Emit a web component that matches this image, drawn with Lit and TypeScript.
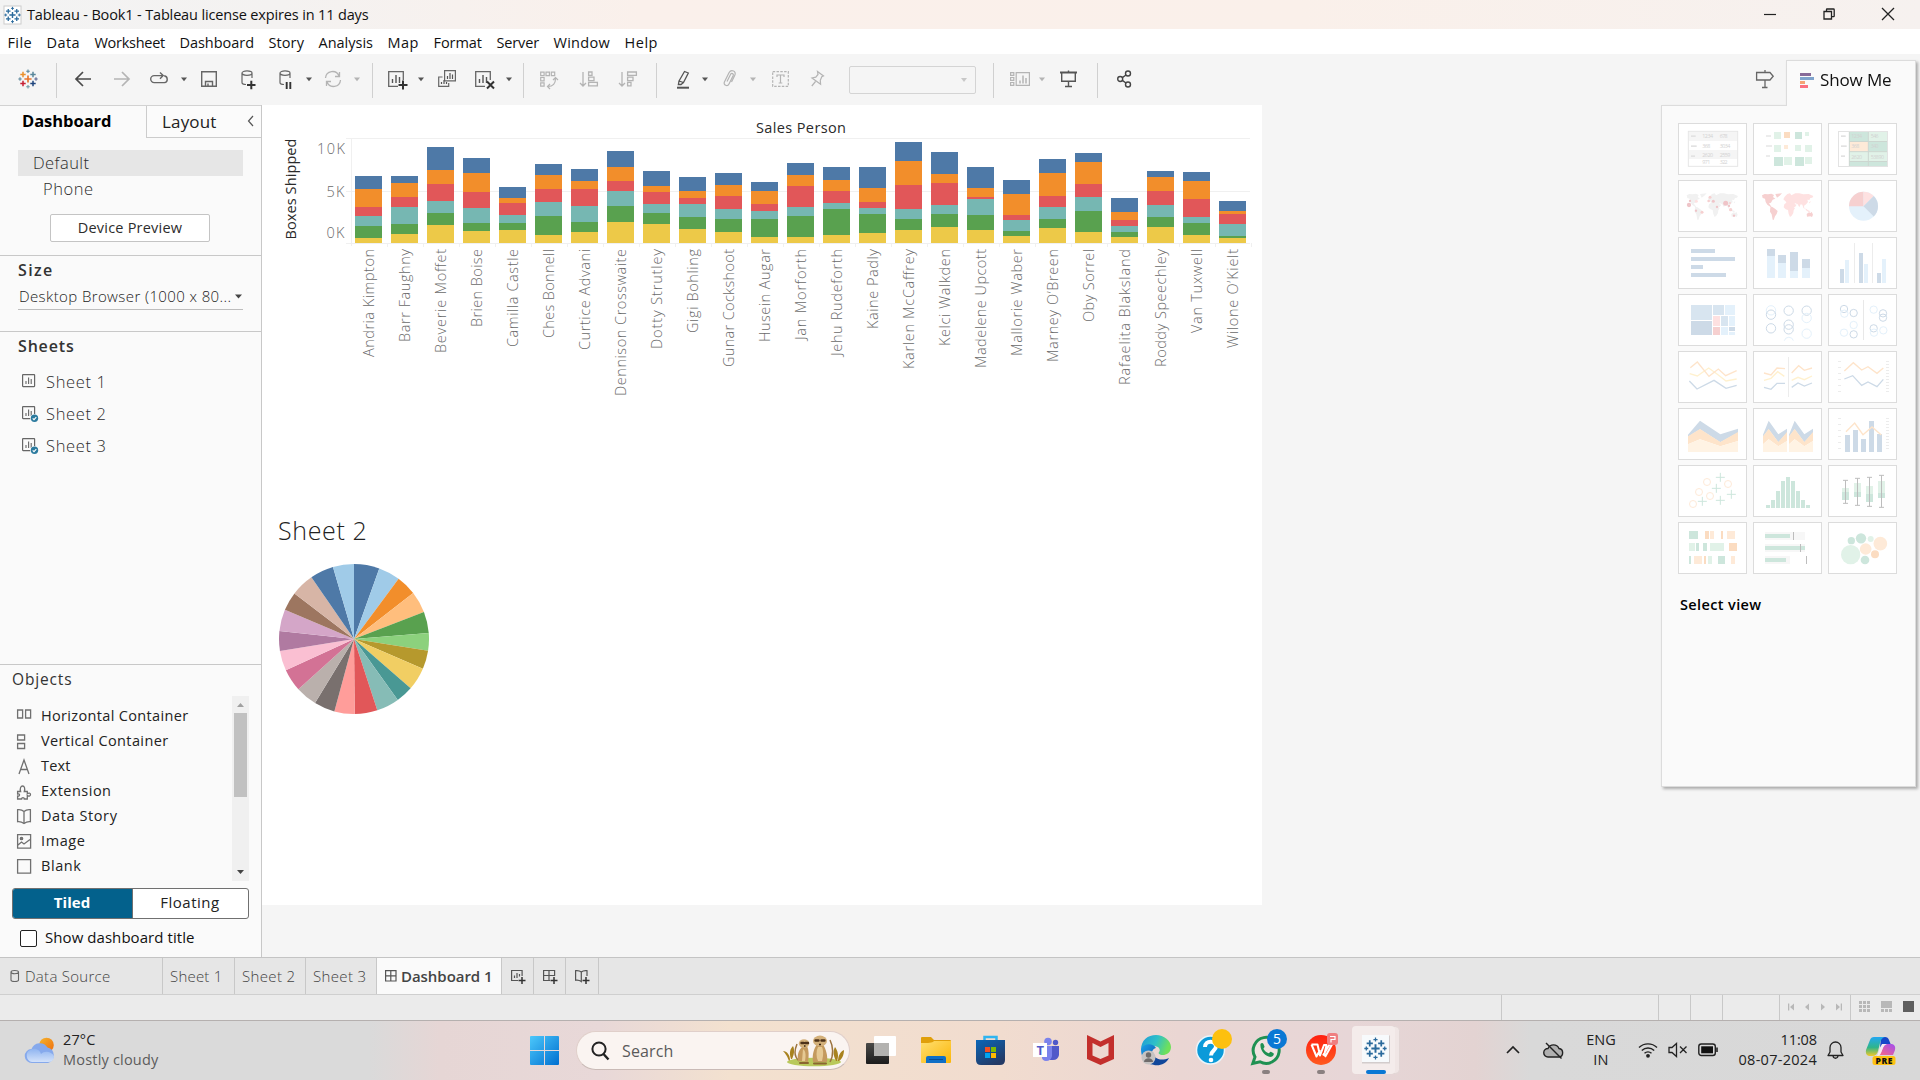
import { LitElement, html, svg, css } from "lit";
import { customElement, property } from "lit/decorators.js";

/** Single-line label whose tracking is adjusted so the text spans `w` pixels. */
@customElement("fit-label")
class FitLabel extends LitElement {
  @property({ type: Number }) w = 0;
  @property() text = "";
  static styles = css`
    :host { display: inline-block; white-space: pre; }
  `;
  firstUpdated() {
    const natural = this.getBoundingClientRect().width;
    if (this.w && natural) {
      this.style.letterSpacing = `${((this.w + 1.5 - natural) / this.text.length).toFixed(3)}px`;
    }
  }
  render() {
    return html`${this.text}`;
  }
}

const fit = (text: string, w: number) => html`<fit-label .text=${text} .w=${w}></fit-label>`;

const icon = (w: number, h: number, body: unknown) =>
  html`<svg class="ic" width=${w} height=${h} viewBox="0 0 ${w} ${h}" fill="none">${body}</svg>`;

type Item = [left: number, width: number, content: unknown];

/** Lays items out in a flex row, with the gap before each derived from its left edge. */
const strip = (items: Item[], from = 0) => {
  let edge = from;
  return items.map(([left, width, content]) => {
    const gap = left - edge;
    edge = left + width;
    return html`<div class="slot" style="margin-left:${gap}px;width:${width}px">${content}</div>`;
  });
};

const plus = (x: number, y: number, r: number, c: string, sw = 1.4) =>
  svg`<path d="M${x - r} ${y}H${x + r}M${x} ${y - r}V${y + r}" stroke=${c} stroke-width=${sw} />`;

const tableauMark = (c: string[], s = 1) => svg`<g transform="scale(${s})">
  ${plus(10, 10, 3.6, c[0], 1.7)}
  ${plus(5, 5.5, 2.7, c[1], 1.5)}${plus(15, 5.5, 2.7, c[2], 1.5)}
  ${plus(5, 14.5, 2.7, c[3], 1.5)}${plus(15, 14.5, 2.7, c[4], 1.5)}
  ${plus(10, 2.2, 1.8, c[2], 1.1)}${plus(10, 17.8, 1.8, c[5], 1.1)}
  ${plus(2, 10, 1.7, c[6], 1.1)}${plus(18, 10, 1.7, c[7], 1.1)}
</g>`;
const brand = ["#e8762d", "#eb912c", "#59879b", "#c72035", "#1f457e", "#7099a6", "#5b879b", "#5b6591"];
const mono = Array(8).fill("#2a6a9c");

const D = "#555";
const G = "#b4b4b4";
const caret = (c = D) => icon(6, 20, svg`<path d="M0 8.500H6L3 12.2Z" fill=${c} />`);
const sep = html`<div class="sep"></div>`;
const barsIn = (x: number, y: number, c: string) =>
  svg`<path d="M${x} ${y}v-4M${x + 3.5} ${y}v-8M${x + 7} ${y}v-6" stroke=${c} stroke-width="1.4" />`;
const cylinder = svg`<path d="M1 4v9.500c0 1.200 1.800 2 4 2M11 4v5M1 4c0-1.300 2.200-2.100 5-2.100s5 .8 5 2.100S8.800 6.300 6 6.300 1 5.300 1 4Z" stroke="#666" stroke-width="1.200" />`;

const tools: Item[] = [
  [18, 20, icon(20, 20, tableauMark(brand))],
  [56, 1, sep],
  [75, 16, icon(16, 20, svg`<path d="M16 10H1.500M8 3 1 10l7 7" stroke="#4a4a4a" stroke-width="1.700" />`)],
  [114, 16, icon(16, 20, svg`<path d="M0 10h14.500M8 3l7 7-7 7" stroke=${G} stroke-width="1.700" />`)],
  [150, 18, icon(18, 20, svg`<path d="M5.500 13.600H4.200a3.500 3.500 0 0 1 0-7H12.500M10 3.400l3.200 3.200-3.200 3.200M14.200 6.700c4 .6 4 6.400.3 6.900H5.500" stroke="#666" stroke-width="1.400" />`)],
  [181, 6, caret()],
  [201, 16, icon(16, 20, svg`<path d="M.7 2.700h14.600v14.600H.7ZM4.500 17v-4.500h7V17M7 17v-2.500" stroke="#666" stroke-width="1.400" />`)],
  [241, 16, icon(16, 20, svg`${cylinder}<path d="M6 16h8.500M10.300 11.800v8.500" stroke="#333" stroke-width="2" />`)],
  [279, 14, icon(14, 20, svg`${cylinder}<path d="M7.700 13v7M11.300 13v7" stroke="#333" stroke-width="1.900" />`)],
  [306, 6, caret()],
  [324, 18, icon(18, 20, svg`<path d="M1.500 9A7 7 0 0 1 15 7M16.500 11A7 7 0 0 1 3 13M15.500 3v4.500H11M2.500 17v-4.500H7" stroke=${G} stroke-width="1.300" />`)],
  [354, 6, caret(G)],
  [372, 1, sep],
  [388, 20, icon(20, 20, svg`<path d="M10 17.300H.7V2.700h14.600V11" stroke="#666" stroke-width="1.300" />${barsIn(4.500, 14, "#555")}<path d="M10.500 16h9M15 11.500v9" stroke="#333" stroke-width="2" />`)],
  [418, 6, caret()],
  [438, 18, icon(18, 20, svg`<path d="M6.600 1.600h10.800v10.300H6.600ZM4.500 8H.7v9.400h10V14" stroke="#666" stroke-width="1.200" /><path d="M9.500 10V7M12 10V4M14.500 10V5.500M3.500 15v-2M6 15v-4M8.500 15v-2" stroke="#555" stroke-width="1.200" />`)],
  [475, 20, icon(20, 20, svg`<path d="M10 17.300H.7V2.700h14.600V11" stroke="#666" stroke-width="1.300" />${barsIn(4.500, 14, "#555")}<path d="M12 12.500l7 7M19 12.500l-7 7" stroke="#333" stroke-width="2" />`)],
  [506, 6, caret()],
  [523, 1, sep],
  [540, 18, icon(18, 20, svg`<path d="M.7 3.200h3.400v3.400H.7ZM.7 8.500h3.400v3.400H.7ZM.7 13.800h3.400v3.400H.7ZM6 3.200h3.400v3.400H6ZM11.300 3.200h3.400v3.400h-3.400ZM8 17.500c5 0 7.500-3 7.500-8M13 11l2.500-2.500L18 11M10 15l-2.500 2.500L10 20" stroke=${G} stroke-width="1.200" />`)],
  [580, 18, icon(18, 20, svg`<path d="M3 3v14M0 14l3 3 3-3M8.600 3h3.400v3.400H8.600ZM8.600 8.200h5.400v3.400H8.600ZM8.600 13.400h8.800v3.400H8.600Z" stroke=${G} stroke-width="1.300" />`)],
  [619, 18, icon(18, 20, svg`<path d="M3 3v14M0 14l3 3 3-3M8.600 3h8.800v3.400H8.600ZM8.600 8.200h5.400v3.400H8.600ZM8.600 13.400h3.400v3.400H8.600Z" stroke=${G} stroke-width="1.300" />`)],
  [656, 1, sep],
  [677, 13, icon(13, 20, svg`<path d="M2 12 7.500 2.500l3.800 1.500L6.500 13.500ZM2 12l-.6 3.500L4 15.500l2.500-2" stroke="#555" stroke-width="1.300" /><path d="M0 18.700h12" stroke="#555" stroke-width="2" />`)],
  [702, 6, caret()],
  [723, 13, icon(13, 20, svg`<path d="M4 12.500 7.500 5.500c1-2 3.500-.8 2.700 1L6 15c-1.500 2.900-6 1.200-4.600-2L6 3.800c2.200-4 8-1.500 5.700 2.700L8.500 13" stroke=${G} stroke-width="1.200" />`)],
  [750, 6, caret(G)],
  [772, 17, icon(17, 20, svg`<path d="M.7 2.700h15.600v14.600H.7Z" stroke=${G} stroke-width="1.200" stroke-dasharray="2.500 1.300" /><path d="M5 8V6h7v2M8.500 6v8M6.700 14h3.600" stroke=${G} stroke-width="1.200" />`)],
  [811, 14, icon(14, 20, svg`<path d="M6.500 2.500 12.500 7l-1.700.8-1.500 3.500.3 4L1 9l3.800-.8L7 5.500ZM4.500 12.500.8 17" stroke=${G} stroke-width="1.200" />`)],
  [849, 127, html`<div class="fitbox"></div>`],
  [993, 1, sep],
  [1010, 20, icon(20, 20, svg`<path d="M.6 3.600h3.200v2.800H.6ZM.6 8.500h3.200v2.800H.6ZM.6 13.500h3.200v2.800H.6ZM6.200 3.600h13.200v12.700H6.200Z" stroke=${G} stroke-width="1.200" /><path d="M10 14.500v-3M13 14.500V6.500M16 14.500V9" stroke=${G} stroke-width="1.500" />`)],
  [1039, 6, caret(G)],
  [1060, 17, icon(17, 20, svg`<path d="M0 3.500h17" stroke="#555" stroke-width="2" /><path d="M1.700 4v8.300h13.600V4M8.500 1.500V4M8.500 12.500v5M5 17.500h7" stroke="#555" stroke-width="1.400" />`)],
  [1097, 1, sep],
  [1117, 15, icon(15, 20, svg`<g stroke="#444" stroke-width="1.400"><circle cx="3.200" cy="10" r="2.500" /><circle cx="11" cy="4.500" r="2.500" /><circle cx="11" cy="15.500" r="2.500" /><path d="M5.300 8.600 9 6M5.300 11.400 9 14" /></g>`)],
  [1755, 20, icon(20, 20, svg`<path d="M1.600 3.500H15l3.200 3.800L15 11H1.600ZM10 1v2.500M10 11v7.500M7 18.500h5.500" stroke="#666" stroke-width="1.300" />`)],
];

const menus: [string, number, number][] = [
  ["File", 8, 23], ["Data", 47, 32], ["Worksheet", 95, 69], ["Dashboard", 180, 73], ["Story", 269, 34],
  ["Analysis", 319, 53], ["Map", 388, 30], ["Format", 434, 47], ["Server", 497, 41], ["Window", 554, 55], ["Help", 625, 32],
];

const palette = ["#4e79a7", "#f28e2b", "#e15759", "#76b7b2", "#59a14f", "#edc948"];
const people: [string, number, number[]][] = [
  ["Andria Kimpton", 108, [13, 18, 9, 10, 12, 5]],
  ["Barr Faughny", 93, [7, 14, 10, 17, 10, 9]],
  ["Beverie Moffet", 104, [23, 14, 17, 12, 12, 18]],
  ["Brien Boise", 78, [15, 19, 16, 15, 8, 12]],
  ["Camilla Castle", 98, [11, 5, 12, 8, 7, 13]],
  ["Ches Bonnell", 89, [11, 14, 13, 14, 19, 8]],
  ["Curtice Advani", 101, [12, 8, 17, 16, 10, 11]],
  ["Dennison Crosswaite", 147, [16, 14, 10, 15, 16, 21]],
  ["Dotty Strutley", 100, [15, 6, 12, 9, 11, 19]],
  ["Gigi Bohling", 84, [14, 7, 6, 13, 12, 14]],
  ["Gunar Cockshoot", 118, [12, 11, 13, 10, 13, 11]],
  ["Husein Augar", 93, [9, 13, 7, 8, 18, 6]],
  ["Jan Morforth", 91, [12, 11, 21, 9, 21, 6]],
  ["Jehu Rudeforth", 107, [13, 11, 12, 6, 26, 8]],
  ["Kaine Padly", 80, [21, 14, 6, 6, 19, 10]],
  ["Karlen McCaffrey", 120, [19, 24, 24, 10, 11, 13]],
  ["Kelci Walkden", 97, [22, 9, 22, 9, 13, 16]],
  ["Madelene Upcott", 119, [21, 9, 2, 16, 15, 13]],
  ["Mallorie Waber", 107, [14, 21, 5, 11, 5, 7]],
  ["Marney O’Breen", 113, [14, 23, 11, 12, 9, 15]],
  ["Oby Sorrel", 73, [9, 22, 13, 14, 21, 11]],
  ["Rafaelita Blaksland", 136, [14, 8, 6, 6, 5, 6]],
  ["Roddy Speechley", 118, [6, 14, 14, 12, 10, 16]],
  ["Van Tuxwell", 84, [9, 18, 18, 6, 12, 8]],
  ["Wilone O’Kielt", 99, [10, 3, 10, 12, 2, 5]],
];

const slices: [string, number][] = [
  ["#4e79a7", 19.7], ["#a0cbe8", 36.5], ["#f28e2b", 52.1], ["#ffbe7d", 68.8], ["#59a14f", 85.4], ["#8cd17d", 99],
  ["#b6992d", 113.3], ["#f1ce63", 131], ["#499894", 144.3], ["#86bcb6", 161.9], ["#e15759", 179.5], ["#ff9d9a", 195.2],
  ["#79706e", 211.3], ["#bab0ac", 227.9], ["#d37295", 245.3], ["#fabfd2", 260.8], ["#b07aa1", 276.1], ["#d4a6c8", 292.9],
  ["#9d7660", 307.4], ["#d7b5a6", 325.4], ["#4e79a7", 343.7], ["#a0cbe8", 360],
];

const barChart = () => html`<svg class="bars" width="1000" height="300" viewBox="0 0 1000 300">
  <g stroke="#f0f0f0" shape-rendering="crispEdges">
    <path d="M84 33.500H988M84 86.500H988M84 138.500H988M89.500 33V141" />
    ${people.map((_, i) => svg`<path d="M${125.5 + i * 36} 138v4" />`)}
  </g>
  <text class="strong" x="539" y="28" text-anchor="middle" textLength="90">Sales Person</text>
  <text class="strong" transform="translate(34 134.500) rotate(-90)" textLength="101">Boxes Shipped</text>
  <text class="tick" x="83" y="49" text-anchor="end" textLength="28">10K</text>
  <text class="tick" x="82.500" y="92" text-anchor="end" textLength="18">5K</text>
  <text class="tick" x="82.500" y="133" text-anchor="end" textLength="18">0K</text>
  ${people.map(([name, len, parts], i) => {
    const x = 93 + i * 36;
    let y = 138 - parts.reduce((a, b) => a + b, 0);
    return svg`${parts.map((h, k) => {
      const r = svg`<rect x=${x} y=${y} width="27" height=${h} fill=${palette[k]} />`;
      y += h;
      return r;
    })}<text class="tick" transform="translate(${x + 18.8} ${144 + len}) rotate(-90)" textLength=${len}>${name}</text>`;
  })}
</svg>`;

const pie = () => {
  let from = 0;
  const at = (a: number) => {
    const t = (a * Math.PI) / 180;
    return `${(75 + 75 * Math.sin(t)).toFixed(2)} ${(75 - 75 * Math.cos(t)).toFixed(2)}`;
  };
  return html`<svg class="pie" width="150" height="150" viewBox="0 0 150 150">
    ${slices.map(([c, to]) => {
      const p = svg`<path d="M75 75L${at(from)}A75 75 0 0 1 ${at(to)}Z" fill=${c} />`;
      from = to;
      return p;
    })}
  </svg>`;
};

const R = (x: number, y: number, w: number, h: number, c: string) =>
  svg`<rect x=${x} y=${y} width=${w} height=${h} fill=${c} />`;
const O = (x: number, y: number, r: number, c: string, w = 3) =>
  svg`<circle cx=${x} cy=${y} r=${r} stroke=${c} stroke-width=${w} />`;
const C = (x: number, y: number, r: number, c: string) => svg`<circle cx=${x} cy=${y} r=${r} fill=${c} />`;
const L = (pts: string, c: string, w = 4) => svg`<polyline points=${pts} stroke=${c} stroke-width=${w} />`;
const P = (pts: string, c: string) => svg`<polygon points=${pts} fill=${c} />`;
const T = (x: number, y: number, t: string) =>
  svg`<text x=${x} y=${y} font-size="16" fill="#d2d2d2" textLength=${t.length * 8}>${t}</text>`;

const b1 = "#cddae7", b2 = "#e4f1fb", b3 = "#d8e5f0";
const g1 = "#cde6dc", g2 = "#e1f2e8", o1 = "#fbdcc1", o2 = "#feead8";
const r1 = "#f6d0d0", r2 = "#fee1e1", s1 = "#fee4ca", s2 = "#fff3e4", y1 = "#fff1cf";

const world = (dx: number, a: string, b: string) => svg`<g transform="translate(${dx} 0)">
  <path fill=${a} d="M140 436l8-4 10 1 10-2 8 4-3 6 7 5-8 3-5 9-6 2 4 6 4 5-2 1-11-8-5-8-2-10-7-2ZM165 472l6-1 8 5 8 7-3 9-5 7-4 11-3-1-3-16-5-8Z" />
  <path fill=${a} d="M180 432l20-2-7 7-8 6Z" />
  <path fill=${b} d="M204 448l4-8 8-8 8-2 4 6 12-6 12 0 12 3 16-1 14 6-3 5-6 1-3 6-6-1 2 7-7 8-3 1-2 5 2 8-4-5-3-9-5-1-4 9-5-9-9-4 1 4 5 1-5 7-4 2 4 2-4 6-1 8-5 8-5 4-4-9-2-12-7-2-6-6 2-9 6-5-1-3Z" />
  <path fill=${a} d="M274 492l7-5 5 2 3-4 4 9-3 7-5-2-10 1Z" />
  <path fill=${b} d="M270 475l8 6 8 3-6 2-8-5ZM281 458l5-6-2 8Z" />
</g>`;

const axes = (y: number) => svg`<g stroke="#ececec" stroke-width="3">
  <path d="M598.500 ${y}v96" stroke-dasharray="3 15" stroke-width="9" />
  <path d="M742.500 ${y}v96" stroke-dasharray="3 6" stroke-width="9" />
</g>`;

/** Chart thumbnails: origin of each drawing plus its shapes. */
const thumbs: [number, number, unknown][] = [
  [114, 219, svg`<rect x="145" y="244" width="148" height="105" stroke="#e6e6e6" stroke-width="3" />
    ${R(147, 246, 144, 27, "#f5f5f5")}${R(147, 300, 144, 27, "#f5f5f5")}
    ${R(153, 256, 14, 5, "#e2e2e2")}${R(153, 286, 17, 5, "#e2e2e2")}${R(153, 316, 12, 5, "#e2e2e2")}
    ${T(187, 265, "1234")}${T(239, 265, "678")}${T(187, 293, "368")}${T(239, 293, "3034")}${T(187, 320, "2620")}${T(239, 320, "2559")}${T(187, 343, "971")}${T(239, 343, "322")}`],
  [339, 219, svg`${R(378, 255, 15, 6, "#ececec")}${R(378, 285, 18, 6, "#ececec")}${R(378, 315, 12, 6, "#ececec")}
    ${R(402, 246, 21, 21, g2)}${R(432, 246, 18, 18, o1)}${R(465, 246, 21, 21, g1)}${R(495, 246, 12, 12, g2)}
    ${R(402, 285, 21, 21, g2)}${R(432, 285, 12, 12, o2)}${R(465, 285, 18, 18, g2)}${R(495, 285, 21, 21, g2)}
    ${R(402, 321, 27, 27, g1)}${R(432, 321, 24, 24, g2)}${R(465, 321, 27, 27, g1)}${R(495, 321, 21, 21, g2)}`],
  [564, 219, svg`${R(628, 245, 57, 29, g1)}${R(685, 245, 57, 29, g2)}${R(628, 274, 57, 31, o2)}${R(685, 274, 57, 31, g1)}
    ${R(628, 305, 114, 29, g2)}${R(628, 334, 114, 15, g1)}
    <path d="M628 245v104M685 245v104M628 274.500h114M628 305h114M628 334.500h114" stroke="#ccd6d0" stroke-width="3" />
    <rect x="595.500" y="244.500" width="147" height="105" stroke="#e3e3e3" stroke-width="3" />
    ${R(603, 256, 14, 5, "#e2e2e2")}${R(603, 286, 17, 5, "#e2e2e2")}${R(603, 316, 12, 5, "#e2e2e2")}
    ${T(634, 264, "1234")}${T(692, 264, "546")}${T(634, 295, "368")}${T(692, 295, "340")}${T(634, 326, "2620")}${T(692, 326, "53890")}`],
  [114, 390, svg`${world(0, "#f1f1f1", "#f1f1f1")}
    ${C(147, 465, 6.5, "#efc4c8")}${C(257, 460, 7.500, "#efc4c8")}${C(220, 454, 4.500, "#efc4c8")}${C(210, 442, 4.500, r1)}${C(206, 453, 4, r1)}${C(272, 479, 5, r1)}${C(186, 487, 4.500, r1)}${C(168, 482, 3.500, "#efc4c8")}${C(231, 471, 3.500, "#efc4c8")}${C(267, 468, 3.500, "#efc4c8")}${C(270, 459, 3, r1)}${C(282, 497, 3.500, "#efc4c8")}${C(150, 453, 3.500, "#efc4c8")}${C(169, 454, 4.500, r2)}`],
  [339, 390, world(226, r1, r2)],
  [564, 390, svg`<circle cx="670.500" cy="469" r="43.500" fill=${b2} />
    <path d="M670.500 469H627A43.500 43.500 0 0 1 670.500 425.500Z" fill=${r1} /><path d="M670.500 469V425.500A43.500 43.500 0 0 1 701.300 438.200Z" fill=${r2} /><path d="M670.500 469L701.300 438.200A43.500 43.500 0 0 1 701.300 499.800Z" fill=${b1} />`],
  [114, 561, svg`${R(153, 597, 72, 12, b1)}${R(153, 621, 132, 12, b1)}${R(153, 645, 36, 12, b1)}${R(153, 669, 105, 12, b1)}`],
  [339, 561, svg`${R(381, 597, 24, 87, b2)}${R(381, 597, 24, 21, b1)}${R(414, 615, 24, 69, b2)}${R(414, 615, 24, 24, b1)}${R(450, 606, 24, 78, b2)}${R(450, 606, 24, 57, b1)}${R(486, 627, 24, 57, b2)}${R(486, 627, 24, 27, b1)}`],
  [564, 561, svg`${R(642, 579, 3, 120, "#ececec")}${R(696, 579, 3, 120, "#ececec")}${R(600, 657, 12, 42, b1)}${R(615, 630, 12, 69, b2)}${R(657, 609, 12, 90, b1)}${R(672, 642, 12, 57, b2)}${R(711, 669, 12, 30, b1)}${R(726, 627, 12, 72, b2)}`],
  [114, 732, svg`${R(153, 765, 63, 45, b3)}${R(153, 813, 63, 42, b1)}${R(219, 765, 33, 30, b3)}${R(255, 765, 30, 30, b2)}${R(219, 798, 21, 30, r2)}${R(243, 798, 21, 30, b3)}${R(267, 798, 18, 30, b2)}${R(219, 831, 21, 24, r1)}${R(243, 831, 21, 24, b2)}${R(267, 831, 18, 12, b1)}${R(267, 846, 18, 9, b2)}`],
  [339, 732, svg`${O(393, 781, 14, b2)}${O(393, 794, 14, b1)}${O(393, 835, 14, b1)}${O(446, 782, 14, b1)}${O(446, 824, 14, b1)}${O(446, 838, 14, b1)}<path d="M433 872a14 14 0 0 1 27 0" stroke=${b2} stroke-width="3" />${O(500, 782, 14, b1)}${O(500, 804, 14, b2)}${O(500, 851, 14, b2)}`],
  [564, 732, svg`${R(669, 750, 3, 120, "#e8e8e8")}${O(612, 777, 11, b1)}${O(613, 791, 11, b2)}${O(641, 789, 11, b1)}${O(641, 825, 11, b2)}${O(612, 848, 11, b2)}${O(641, 853, 11, b1)}${O(701, 779, 11, b2)}${O(729, 790, 11, b1)}${O(729, 803, 11, b1)}${O(701, 835, 11, b1)}${O(702, 848, 11, b2)}${O(730, 841, 11, b2)}`],
  [114, 33, svg`${L("149,101 172,108 206,84 232,103 258,123 290,117", y1)}${L("151,83 172,66 207,109 235,87 257,107 290,92", s1)}${L("148,123 171,147 222,121 258,145 290,136", b1)}`],
  [339, 33, svg`${R(444, 51, 3, 120, "#ececec")}${L("372,99 393,105 411,84 435,86", s1)}${L("372,121 393,115 413,95 433,109", y1)}${L("372,142 393,148 411,130 435,130", b1)}${L("455,99 476,77 493,91 516,84", s1)}${L("455,121 474,112 493,119 516,108", y1)}${L("455,142 474,129 493,138 516,129", b1)}`],
  [564, 33, svg`${axes(63)}${L("613,93 640,68 665,90 684,80 711,100 730,84", s1)}${L("613,117 638,107 665,136 684,126 711,140 730,118", b1)}`],
  [114, 204, svg`${P("144,284 180,242 241,283 294,266 294,278 241,307 180,268 144,290", b1)}${P("144,289 180,267 241,306 294,276 294,303 241,319 180,298 144,313", s1)}${P("144,313 180,298 241,319 294,303 294,336 144,336", s2)}`],
  [339, 204, svg`${P("369,284 386,242 415,283 441,266 441,278 415,307 386,268 369,290", b1)}${P("369,289 386,267 415,306 441,276 441,303 415,319 386,298 369,313", s1)}${P("369,313 386,298 415,319 441,303 441,336 369,336", s2)}
    ${P("447,284 464,242 493,283 519,266 519,278 493,307 464,268 447,290", b1)}${P("447,289 464,267 493,306 519,276 519,303 493,319 464,298 447,313", s1)}${P("447,313 464,298 493,319 519,303 519,336 447,336", s2)}`],
  [564, 204, svg`${axes(234)}${R(615, 285, 15, 51, b1)}${R(639, 270, 15, 66, b1)}${R(663, 297, 15, 39, b1)}${R(687, 243, 15, 93, b1)}${R(711, 282, 15, 54, b1)}${L("618,275 644,249 669,284 696,261 724,285", s1)}`],
  [114, 375, svg`${O(201, 426, 10.500, o2)}${O(264, 432, 10.500, o2)}${O(177, 456, 10.500, o2)}${O(210, 468, 10.500, o2)}${O(159, 492, 10.500, o2)}
    ${[[241, 412], [229, 445], [274, 463], [241, 481], [187, 484]].map(([x, y]) => plus(x, y, 13.5, g1, 3))}`],
  [339, 375, svg`${[9, 24, 51, 81, 93, 81, 51, 24, 9].map((h, i) => R(378 + i * 15, 504 - h, 12, h, g1))}`],
  [564, 375, svg`${[[606, 444, 456, 480, 421, 490], [642, 429, 456, 471, 415, 496], [678, 438, 462, 486, 412, 499], [714, 423, 459, 474, 406, 502]].map(
    ([x, a, m, b, t, e]) => svg`${R(x, a, 21, m - a, g2)}${R(x, m, 21, b - m, g1)}<path d="M${x + 3} ${t}h15M${x + 10.5} ${t}V${e}M${x + 3} ${e}h15" stroke="#bdbdbd" stroke-width="3" />`)}`],
  [114, 546, svg`${R(147, 573, 27, 24, g1)}${R(195, 573, 12, 24, o1)}${R(210, 573, 12, 24, o2)}${R(243, 573, 6, 24, o1)}${R(261, 573, 24, 24, o2)}
    ${R(147, 609, 18, 24, g2)}${R(168, 609, 9, 24, g1)}${R(189, 609, 12, 24, g1)}${R(210, 609, 42, 24, g2)}${R(267, 609, 24, 24, o1)}
    ${R(147, 648, 6, 24, g1)}${R(162, 648, 24, 24, o2)}${R(192, 648, 6, 24, o1)}${R(204, 648, 12, 24, g2)}${R(234, 648, 21, 24, g1)}${R(273, 648, 12, 24, o2)}`],
  [339, 546, svg`${R(375, 576, 120, 24, "#f7f7f7")}${R(375, 612, 120, 24, "#f7f7f7")}${R(375, 648, 75, 24, "#f7f7f7")}${R(375, 582, 75, 12, g1)}${R(375, 618, 120, 12, g1)}${R(375, 654, 63, 12, g1)}${R(459, 576, 3, 24, "#bdbdbd")}${R(480, 612, 3, 24, "#bdbdbd")}${R(498, 648, 3, 24, "#bdbdbd")}`],
  [564, 546, svg`${C(632, 644, 29, g2)}${C(634, 602, 11, g1)}${C(663, 595, 15.500, g1)}${C(692, 597, 9, g2)}${C(721, 611, 20.500, o2)}${C(677, 627, 17.500, o2)}${C(705, 643, 12, o1)}${C(675, 660, 13, g1)}`],
];

const sheetIcon = (linked: boolean) => icon(18, 18, svg`
  <rect x="1.600" y="1.600" width="12" height="12" rx=".5" stroke="#666" stroke-width="1.200" />
  <path d="M5 11V8M7.600 11V4.500M10.200 11V6" stroke="#666" stroke-width="1.100" />
  ${linked ? svg`<circle cx="13.500" cy="13.300" r="4.300" fill="#fafafa" /><circle cx="13.500" cy="13.300" r="3.700" fill="#2b7a9e" /><path d="M11.700 13.400l1.300 1.300 2.300-2.600" stroke="#fff" stroke-width="1.100" />` : ""}`);

const objects: [string, number, unknown][] = [
  ["Horizontal Container", 146, svg`<path d="M1.600 3h5v8h-5ZM9.600 3h5v8h-5Z" />`],
  ["Vertical Container", 126, svg`<path d="M1.600 3h7v5h-7ZM1.600 11.500h7v5h-7Z" />`],
  ["Text", 28, svg`<path d="M3 17 8 3l5 14M4.600 12.500h6.800" />`],
  ["Extension", 69, svg`<path d="M1.600 9.500h3c-1-3 .2-5.500 2-5.500s2.700 2.500 1.700 5.500h3v2.200c1.500-1 3.200-.7 3.200.9s-1.700 2-3.200 1v3.400h-3c.3-1.700-3-1.700-2.700 0h-4v-3c2.400.8 2.800-2.700 0-2Z" />`],
  ["Data Story", 75, svg`<path d="M8 4.500C6 2.700 4 2.400 1.600 2.700v12C4 14.400 6 15 8 16.500c2-1.500 4-2.100 6.400-1.800v-12C12 2.400 10 2.700 8 4.500ZM8 4.500v12" />`],
  ["Image", 43, svg`<path d="M1.600 2.600h13v13.500h-13ZM2 13l3.500-3 2.500 2 6-4.500" /><circle cx="5.500" cy="6.500" r="1.200" fill="#777" />`],
  ["Blank", 39, svg`<path d="M1.600 2.600h13v13.500h-13Z" />`],
];

const meerkats = icon(62, 32, svg`
  <ellipse cx="31" cy="27" rx="27" ry="4.200" fill="#b9c95c" />
  <path d="M6 26C4 20 1 17 0 16c4 0 7 4 7 9ZM8 24c-2-6-1-10 2-13 2 4 1 9-1 13ZM53 26c-3-6-3-10-1-14 3 4 4 9 2 14ZM55 26c0-5 2-9 6-11 0 5-2 9-5 11Z" fill="#a8821f" />
  <path d="M16 26c-6-6-4-12-2-17M47 27c4-7 3-16 0-22" stroke="#9c7440" stroke-width="1.500" />
  <path d="M15 26c-1-7 1-11 4-14l5-1c2 4 2 10 1 16ZM30 27c-1-8 1-13 4-18h6c3 6 5 11 4 18Z" fill="#c49a5e" />
  <path d="M20 14c3 2 3 7 2 12h-3ZM35 12h4c2 5 1 10 0 14h-4c-2-4-2-10 0-14Z" fill="#e6c993" />
  <ellipse cx="21" cy="8.500" rx="5.200" ry="4.200" fill="#d3b07a" /><ellipse cx="37" cy="6" rx="7" ry="5.400" fill="#d3b07a" />
  <path d="M18.500 8h2M22.500 8h2.500M32.500 5.500h3M38.500 5.500h3" stroke="#4d321a" stroke-width="2.400" stroke-linecap="round" />
  <path d="M36 9.500h2M21 11h1.500" stroke="#3a2412" stroke-width="1.500" />
  <path d="M17 28h8M31 28.500h12" stroke="#8a6530" stroke-width="2" stroke-linecap="round" />`);

const big = (w: number, body: unknown) => icon(w, 48, body);
const apps: Item[] = [
  [530, 29, big(29, svg`<defs><linearGradient id="win" x1="0" y1="0" x2="1" y2="1"><stop offset="0" stop-color="#4cc8fb" /><stop offset="1" stop-color="#006fd0" /></linearGradient></defs>
    <path d="M1 10h13v14H0V11a1 1 0 0 1 1-1ZM15 10h13a1 1 0 0 1 1 1v13H15ZM0 25h14v14H1a1 1 0 0 1-1-1ZM15 25h14v13a1 1 0 0 1-1 1H15Z" fill="url(#win)" />`)],
  [576, 274, html`<div class="search">
    ${icon(18, 20, svg`<circle cx="8" cy="8" r="6.600" stroke="#222" stroke-width="2" /><path d="m12.500 13 5 5.500" stroke="#222" stroke-width="2.400" />`)}
    <span class="grow">${fit("Search", 50)}</span>${meerkats}</div>`],
  [866, 30, big(30, svg`<defs><linearGradient id="tv" x1="0" y1="0" x2="0" y2="1"><stop offset="0" stop-color="#4a4a48" /><stop offset="1" stop-color="#1c1c1c" /></linearGradient></defs>
    <rect y="17" width="23" height="21" rx="1" fill="url(#tv)" /><rect x="8" y="10" width="22" height="20" rx="1" fill="#fff" /><path d="M8 17h15v13H8Z" fill="#b3b2b0" />`)],
  [921, 30, big(30, svg`<defs><linearGradient id="fo" x1="0" y1="0" x2="1" y2="1"><stop offset="0" stop-color="#ffdf70" /><stop offset="1" stop-color="#fbb608" /></linearGradient></defs>
    <path d="M0 16v-4a1 1 0 0 1 1-1h9l3 3h16a1 1 0 0 1 1 1v4H0Z" fill="#e09f0a" /><path d="M0 17c8 0 11 0 13-2h17v21a1 1 0 0 1-1 1H1a1 1 0 0 1-1-1Z" fill="url(#fo)" /><path d="M5 37v-5q0-2 2-2h16q2 0 2 2v5Z" fill="#0f6fc6" /><path d="M8 33.500h14" stroke="#0a4c93" />`)],
  [976, 29, big(29, svg`<defs><linearGradient id="st" x1="0" y1="0" x2=".6" y2="1"><stop offset="0" stop-color="#0a66b8" /><stop offset="1" stop-color="#233a66" /></linearGradient></defs>
    <path d="M8.500 17v-6h12v6" stroke="#2fb4f0" stroke-width="2.500" /><path d="M0 14h29v20q0 5-5 5H5q-5 0-5-5Z" fill="url(#st)" /><path d="M9 21h5v5H9Z" fill="#f25022" /><path d="M15 21h5v5h-5Z" fill="#7fba00" /><path d="M9 27h5v5H9Z" fill="#00a4ef" /><path d="M15 27h5v5h-5Z" fill="#ffb900" />`)],
  [1033, 27, big(27, svg`<circle cx="15" cy="15.500" r="3.800" fill="#7b83eb" /><circle cx="22.500" cy="16.500" r="2.700" fill="#5059c9" /><path d="M18 20h8v9q-1 5-6 5h-3Z" fill="#5059c9" /><path d="M9 20h10v10q-1 5-6 5-3.500-.5-4-3Z" fill="#7b83eb" />
    <path d="M0 17h14v14H0Z" fill="#fff" /><text x="7.200" y="29" text-anchor="middle" font-size="13" font-weight="700" fill="#5059c9">T</text>`)],
  [1087, 27, big(27, svg`<path d="M0 9l13.500 6.500L27 9v24l-13.500 6L0 33ZM5.500 17v12.500l8 3.500 8-3.500V17l-8 4Z" fill="#c32f2c" fill-rule="evenodd" />`)],
  [1141, 30, big(30, svg`<defs><linearGradient id="e1" x1="0" y1="0" x2="1" y2=".3"><stop offset="0" stop-color="#1f9ad7" /><stop offset=".55" stop-color="#2fc0c8" /><stop offset="1" stop-color="#6fe05a" /></linearGradient><linearGradient id="e2" x1="0" y1="0" x2="1" y2="1"><stop offset="0" stop-color="#1aa0e8" /><stop offset="1" stop-color="#0c4fa8" /></linearGradient></defs>
    <path d="M0 24C0 14 7 9 15 9s15 6 15 12c0 6-5 8-8 8-4 0-5-2-4-3 2-2 0-6-5-6C7 20 2 20 0 24Z" fill="url(#e1)" /><path d="M0 23c3-6 12-6 15-1-5 1-7 10 2 14-3 3-8 3-11 1-4-3-6-8-6-14Z" fill="url(#e2)" /><path d="M12 26c0 6 7 10 16 6-3 6-9 8-15 7-6-2-5-10-1-13Z" fill="#10479a" />
    <circle cx="7.500" cy="31.500" r="7" fill="#c6c3c2" /><circle cx="7.500" cy="29" r="2.700" fill="#6f6c6b" /><path d="M3 36c0-5 9-5 9 0Z" fill="#6f6c6b" />`)],
  [1196, 30, big(36, svg`<circle cx="14.500" cy="24" r="14" fill="#0b9ad9" stroke="#e9f5fb" stroke-width="1.500" /><path d="M9 21c0-7 11-7 11-.5 0 4-5 4-5 9" stroke="#fff" stroke-width="4" /><circle cx="15" cy="34" r="2.300" fill="#fff" /><circle cx="26" cy="13" r="10" fill="#fdc00f" />`)],
  [1251, 30, big(36, svg`<path d="M1.800 37.500 4 31A13 13 0 1 1 9 35.800Z" fill="#efe3e0" stroke="#1f9152" stroke-width="3" /><path d="M9.500 18c1-1.500 2.500-1 3 0l1 2.500c.2.800-1.500 2-1 2.600 1.500 2.200 3 3.500 5 4.200.8.200 1.500-1.800 2.400-1.500l2.600 1.400c.7.400.2 3-2 3.600-5 1.200-12-6-11-12.800Z" fill="#1f9152" />
    <circle cx="26" cy="13" r="10" fill="#0a78d4" /><text x="26" y="18" text-anchor="middle" font-size="14" fill="#fff">5</text><rect x="11" y="44" width="8" height="4" rx="2" fill="#8a8080" />`)],
  [1306, 30, big(34, svg`<defs><linearGradient id="wp" x1="0" y1="0" x2="0" y2="1"><stop offset="0" stop-color="#ff1f10" /><stop offset="1" stop-color="#ff5a1f" /></linearGradient></defs><circle cx="15" cy="24" r="15" fill="url(#wp)" /><path d="M5.500 18.500h6l2.500 11 4-10.500h2.500L18 30M5.500 18.500l5 12L14 24M17 29.500l6.500-11H26L19 31" stroke="#fff" stroke-width="2" stroke-linejoin="round" />
    <rect x="21" y="7" width="11" height="12" rx="3" fill="#ef7f80" /><path d="M24 10.500h5v3h-4v3" stroke="#fff" stroke-width="1.200" /><rect x="11" y="44" width="8" height="4" rx="2" fill="#8a8080" />`)],
  [1352, 48, big(48, svg`<rect x="30" y=".5" width="17.500" height="47" rx="4" fill="#f0e6e5" stroke="#e2d6d5" /><rect x="0" y="0" width="43" height="48" rx="4" fill="#f4eceb" /><rect x="10" y="9.500" width="28" height="28" fill="#d2cccc" /><rect x="10" y="9" width="27" height="27" fill="#f7fafc" /><g transform="translate(12 11)">${tableauMark(mono, 1.15)}</g><rect x="14" y="44" width="20" height="4" rx="2" fill="#0a78d4" />`)],
  [1506, 14, icon(14, 48, svg`<path d="m1 27 6-6 6 6" stroke="#222" stroke-width="1.700" />`)],
  [1543, 20, icon(20, 48, svg`<path d="M5 31a4 4 0 0 1 0-8.500 6 6 0 0 1 11 0 4.300 4.300 0 0 1 0 8.500Z" fill="#b0b0b0" stroke="#222" stroke-width="1.400" /><path d="m3 17 15.500 15.500" stroke="#222" stroke-width="1.400" />`)],
  [1584, 34, html`<div class="two mid">${fit("ENG", 28)}${fit("IN", 14)}</div>`],
  [1638, 20, icon(20, 48, svg`<g stroke="#222" stroke-width="1.400"><path d="M1 21.500a13 13 0 0 1 18 0M3.800 24.500a9 9 0 0 1 12.400 0M6.500 27.300a5.200 5.200 0 0 1 7 0" /></g><circle cx="10" cy="29.800" r="1.900" fill="#222" />`)],
  [1668, 20, icon(20, 48, svg`<path d="M1 21.500h3L8.500 17.500v13L4 26.500H1ZM12 20.500l6.500 6.500M18.500 20.500 12 27" stroke="#222" stroke-width="1.300" />`)],
  [1698, 21, icon(21, 48, svg`<rect x=".8" y="18" width="16.500" height="11.500" rx="2.500" stroke="#222" stroke-width="1.400" /><rect x="3.200" y="20.300" width="11.800" height="7" fill="#111" /><path d="M18.200 21.500h1.600v4.500h-1.600Z" fill="#222" />`)],
  [1731, 86, html`<div class="two end">${fit("11:08", 35)}${fit("08-07-2024", 77)}</div>`],
  [1827, 17, icon(17, 48, svg`<path d="M1 29.500 3 26v-4.500a5.500 5.500 0 0 1 11 0V26l2 3.500ZM6 30c.5 3 4.500 3 5 0" stroke="#222" stroke-width="1.300" stroke-linejoin="round" />`)],
  [1866, 30, icon(30, 48, svg`<defs><linearGradient id="c1" x1="0" y1="0" x2="0" y2="1"><stop offset="0" stop-color="#22a7f2" /><stop offset=".55" stop-color="#2fb58a" /><stop offset="1" stop-color="#f2c928" /></linearGradient><linearGradient id="c2" x1="1" y1="0" x2="0" y2="1"><stop offset="0" stop-color="#a04df0" /><stop offset="1" stop-color="#ff6a80" /></linearGradient></defs>
    <path d="M15 11h4q3 0 4 3l2 5h-7q-3 0-4 3Z" fill="#1747c9" /><path d="M8 11h11q-4 1-5 6l-2 8q-1 5-6 5H3q-4-1-3-6L4 14q1-3 4-3Z" fill="url(#c1)" /><path d="M20 18h6q4 1 3 6l-2 5H11q4-1 5-5l1-3q1-3 3-3Z" fill="url(#c2)" /><path d="M16 18h5q-3 1-4 4l-2 5q-1 3-4 3l3-8Z" fill="#f6eaf2" />
    <rect x="6.500" y="30" width="23" height="9" rx="2.500" fill="#fdc212" /><text x="18" y="37.800" text-anchor="middle" font-size="8.500" font-weight="800" fill="#111" textLength="17">PRE</text>`)],
];

@customElement("app-root")
class AppRoot extends LitElement {
  static styles = css`
    * { box-sizing: border-box; }
    :host { display: flex; flex-direction: column; width: 1920px; height: 1080px; overflow: hidden; background: #f5f5f5; color: #333; font: 15px/20px "Open Sans", "Noto Sans", sans-serif; }
    .ic { display: block; overflow: visible; flex: none; }
    .slot { flex: none; display: flex; }
    .titlebar { height: 29px; flex: none; display: flex; align-items: center; padding: 0 26px 0 4px; background: linear-gradient(90deg, #f3f3f3, #f4f2f1 280px, #faf0eb 640px, #faf0ea 1300px, #f6f1ef); color: #111; }
    .titlebar .name { margin-left: 6px; flex: 1; font-size: 14.500px; }
    .winbtns { display: flex; gap: 47px; margin-top: -1px; }
    .menubar { height: 25px; flex: none; display: flex; align-items: center; background: #fff; color: #111; font-size: 14.500px; padding-top: 2px; }
    .toolbar { height: 51px; flex: none; display: flex; align-items: flex-start; padding-top: 15px; }
    .sep { width: 1px; height: 35px; margin-top: -6px; background: #d0d0d0; }
    .fitbox { width: 127px; height: 28px; margin-top: -3px; border: 1px solid #d4d4d4; border-radius: 2px; display: flex; justify-content: flex-end; align-items: center; padding-right: 8px; }
    .fitbox::after { content: ""; border: 3.500px solid transparent; border-top: 4px solid #c8c8c8; border-bottom: 0; }
    .body { height: 852px; flex: none; display: flex; }
    .side { width: 262px; flex: none; background: #fafafa; border-right: 1px solid #c8c8c8; display: flex; flex-direction: column; }
    .ptabs { display: flex; height: 33px; border-top: 1px solid #d2d2d2; }
    .ptabs .on { width: 146px; padding: 5px 0 0 22px; font-size: 16.500px; font-weight: 700; color: #000; }
    .ptabs .off { flex: 1; border-left: 1px solid #ccc; border-bottom: 1px solid #ccc; padding: 6px 7px 0 15px; font-size: 17px; color: #222; display: flex; justify-content: space-between; background: #fbfbfb; }
    .ptabs .off .ic { margin-top: 3px; }
    .devices { padding: 12px 18px 0; height: 117px; font-size: 16.500px; font-weight: 350; line-height: 26px; color: #2c2c2c; }
    .devices .sel { background: #e6e6e6; padding-left: 15px; height: 26px; }
    .devices .ph { padding-left: 25px; height: 26px; }
    .preview { margin: 12px 0 0 32px; width: 160px; height: 28px; border: 1px solid #c4c4c4; border-radius: 2px; background: #fff; text-align: center; line-height: 26px; font-size: 14.500px; font-weight: 400; }
    .sec { border-top: 1px solid #c8c8c8; padding: 0 18px; }
    .sec h3 { margin: 0; height: 28px; line-height: 28px; font-size: 16px; font-weight: 600; }
    .size { height: 76px; }
    .select { display: flex; justify-content: space-between; align-items: center; height: 26px; border-bottom: 1px solid #bdbdbd; padding: 0 1px 2px; font-size: 15px; font-weight: 350; color: #222; }
    .sheets { height: 333px; }
    .sheets .rows { margin-top: 6px; }
    .sheets .row { height: 32px; display: flex; align-items: center; padding-left: 3px; gap: 7px; font-size: 16.500px; font-weight: 350; color: #2c2c2c; }
    .objects { height: 293px; padding: 0 12px; }
    .objects h3 { font-weight: 500; font-size: 15.500px; }
    .list { display: flex; height: 185px; margin-top: 3px; }
    .list .rows { flex: 1; padding-top: 7px; overflow: hidden; color: #222; }
    .list .row { height: 25px; display: flex; align-items: center; padding-left: 4px; gap: 9px; font-size: 14.500px; }
    .list .row .ic { stroke: #707070; stroke-width: 1.300; }
    .scroll { width: 17px; background: #f0f0f0; display: flex; flex-direction: column; align-items: center; padding: 6px 0; margin-right: 0; }
    .thumb { width: 13px; height: 84px; background: #c1c1c1; margin: 5px 0 auto; }
    .toggle { display: flex; height: 31px; margin-top: 7px; border: 1px solid #707070; border-radius: 3px; overflow: hidden; background: #fff; line-height: 27px; text-align: center; color: #222; }
    .toggle .on { width: 121px; margin: -1px; line-height: 28px; background: #03618c; color: #fff; font-weight: 700; border-right: 1px solid #707070; }
    .toggle .off { flex: 1; }
    .check { display: flex; align-items: center; gap: 8px; height: 17px; margin: 11px 0 0 8px; color: #111; }
    .check fit-label { margin-top: -3px; }
    .check i { width: 17px; height: 17px; border: 1px solid #222; border-radius: 2px; background: #fff; }
    .canvas { width: 1000px; height: 800px; background: #fff; display: flex; flex-direction: column; }
    .bars { display: block; flex: none; }
    .bars text { font-size: 14.500px; }
    .bars .strong { fill: #2a2a2a; font-weight: 500; }
    .bars .tick { fill: #6a6a6a; font-weight: 350; }
    .pietitle { margin: 107px 0 0 16px; height: 36px; line-height: 36px; font-size: 25px; font-weight: 300; color: #222; }
    .pie { display: block; margin: 16px 0 0 17px; }
    .showme { margin: -45px 0 0 399px; width: 255px; display: flex; flex-direction: column; filter: drop-shadow(2px 2px 1.500px rgba(0,0,0,.3)); height: 727px; }
    .smtab { align-self: flex-end; width: 130px; height: 46px; background: #fafafa; border: 1px solid #dcdcdc; border-bottom: 0; display: flex; align-items: flex-start; padding: 9px 0 0 13px; gap: 6px; font-size: 17px; color: #111; position: relative; z-index: 1; }
    .smtab .ic { margin-top: 2px; }
    .smbody { margin-top: -1px; flex: 1; background: #fafafa; border: 1px solid #dcdcdc; padding: 17px 0 0 16px; }
    .grid { display: grid; grid-template-columns: repeat(3, 69px); gap: 5px 6px; }
    .grid div { height: 52px; background: #fff; border: 1px solid #dcdcdc; }
    .grid svg { display: block; margin: -1px; }
    .view { margin: 21px 0 0 2px; font-weight: 600; font-size: 14.500px; color: #000; }
    .tabs { height: 38px; flex: none; display: flex; background: #e6e6e6; border-top: 1px solid #c4c4c4; border-bottom: 1px solid #cfcfcf; font-size: 15px; font-weight: 350; color: #444; }
    .tab { height: 36px; border-right: 1px solid #c8c8c8; display: flex; align-items: center; padding-left: 7px; width: 100%; }
    .tab.add { padding-left: 8px; }
    .tab.on { background: #fafafa; font-weight: 600; padding-left: 8px; gap: 4px; color: #444; }
    .tab.ds { padding-left: 10px; gap: 5px; }
    .status { height: 25px; flex: none; display: flex; background: #ebebeb; }
    .status .bar { width: 1px; height: 25px; background: #c8c8c8; }
    .taskbar { height: 60px; flex: none; display: flex; align-items: flex-start; padding-top: 5px; border-top: 1px solid #b5b0af; color: #222; background: linear-gradient(90deg, #dadada 0, #dadada 370px, #e6d6d5 440px, #e8d8d8 600px, #f3e1cf 730px, #f1dccf 1000px, #ead6d3 1180px, #e7d6d7 1350px, #e3d3d2 1475px, #d9d9d9 1530px, #d8d8d8); }
    .weather { display: flex; gap: 8px; width: 200px; padding: 4px 0 0 0; }
    .two { display: flex; flex-direction: column; align-items: flex-start; padding-top: 4px; width: 100%; font-size: 14.500px; }
    .weather .two { padding: 0; }
    .two.mid { align-items: center; }
    .two.end { align-items: flex-end; }
    .dim { color: #5c5c5c; }
    .search { width: 274px; height: 39px; margin-top: 5px; border-radius: 20px; border: 1px solid #e0cfca; border-bottom-color: #c9bab6; background: #faf4f1; display: flex; align-items: center; padding: 0 4px 0 14px; color: #5a5a5a; font-size: 16px; }
    .search .grow { flex: 1; padding: 1px 0 0 13px; }
  `;

  render() {
    const addTab = (d: string) => html`<div class="tab add">${icon(16, 16, svg`<path d=${d} stroke="#555" stroke-width="1.200" /><path d="M8.500 12.500h7M12 9v7" stroke="#333" stroke-width="1.500" />`)}</div>`;
    const bar = html`<div class="bar"></div>`;
    const nav = (d: string) => icon(8, 25, svg`<path d=${d} fill="#b8b8b8" />`);
    return html`
      <div class="titlebar">
        ${icon(17, 18, svg`<rect x="0" y="0" width="17" height="18" fill="#fff" stroke="#ccc" /><g transform="translate(0 .5)">${tableauMark(mono, 0.85)}</g>`)}
        <span class="name">${fit("Tableau - Book1 - Tableau license expires in 11 days", 340)}</span>
        <div class="winbtns">
          ${icon(12, 12, svg`<path d="M0 6.500h12" stroke="#222" stroke-width="1.200" />`)}
          ${icon(12, 12, svg`<path d="M1 3.500h7.500V11H1ZM3.500 3.300V1.500Q3.500 1 4 1h6.500q.7 0 .7.7V8q0 .6-.5.6H8.700" stroke="#222" stroke-width="1.300" />`)}
          ${icon(12, 12, svg`<path d="M0 0 12 12M12 0 0 12" stroke="#222" stroke-width="1.300" />`)}
        </div>
      </div>
      <div class="menubar">${strip(menus.map(([t, x, w]) => [x - 0.5, w + 2, fit(t, w)] as Item))}</div>
      <div class="toolbar">${strip(tools)}</div>

      <div class="body">
        <div class="side">
          <div class="ptabs">
            <div class="on">${fit("Dashboard", 88)}</div>
            <div class="off">${fit("Layout", 53)}${icon(7, 12, svg`<path d="M6 1 1.500 6 6 11" stroke="#555" stroke-width="1.200" />`)}</div>
          </div>
          <div class="devices">
            <div class="sel">${fit("Default", 55)}</div>
            <div class="ph">${fit("Phone", 49)}</div>
            <div class="preview">${fit("Device Preview", 103)}</div>
          </div>
          <div class="sec size">
            <h3>${fit("Size", 34)}</h3>
            <div class="select">${fit("Desktop Browser (1000 x 80...", 211)}${icon(7, 20, svg`<path d="M0 8.500h7L3.500 12.500Z" fill="#444" />`)}</div>
          </div>
          <div class="sec sheets">
            <h3>${fit("Sheets", 55)}</h3>
            <div class="rows">${[1, 2, 3].map((n) => html`<div class="row">${sheetIcon(n > 1)}${fit(`Sheet ${n}`, 59)}</div>`)}</div>
          </div>
          <div class="sec objects">
            <h3>${fit("Objects", 59)}</h3>
            <div class="list">
              <div class="rows">${objects.map(([t, w, g]) => html`<div class="row">${icon(16, 18, g)}${fit(t, w)}</div>`)}</div>
              <div class="scroll">
                ${icon(7, 6, svg`<path d="M0 5h7L3.500 1Z" fill="#a0a0a0" />`)}
                <div class="thumb"></div>
                ${icon(7, 6, svg`<path d="M0 1h7L3.500 5Z" fill="#444" />`)}
              </div>
            </div>
            <div class="toggle"><div class="on">${fit("Tiled", 35)}</div><div class="off">${fit("Floating", 58)}</div></div>
            <div class="check"><i></i>${fit("Show dashboard title", 148)}</div>
          </div>
        </div>
        <div class="canvas">
          ${barChart()}
          <div class="pietitle">${fit("Sheet 2", 88)}</div>
          ${pie()}
        </div>
        <div class="showme">
          <div class="smtab">
            ${icon(14, 16, svg`<path d="M0 1h11v3H0Z" fill="#876a98" /><path d="M0 5h14v3H0Z" fill="#7fa3cc" /><path d="M0 9h5v3H0Z" fill="#f5a376" /><path d="M0 13h8v3H0Z" fill="#fb7080" />`)}
            ${fit("Show Me", 70)}
          </div>
          <div class="smbody">
            <div class="grid">${thumbs.map(([x, y, g]) => html`<div><svg width="69" height="52" viewBox="${x} ${y} 207 156" fill="none">${g}</svg></div>`)}</div>
            <div class="view">${fit("Select view", 80)}</div>
          </div>
        </div>
      </div>

      <div class="tabs">${strip([
        [0, 163, html`<div class="tab ds">${icon(10, 14, svg`<path d="M1 3v8c0 1 1.500 1.500 3.700 1.500S8.500 12 8.500 11V3M1 3c0-1 1.500-1.500 3.700-1.500S8.500 2 8.500 3 7 4.700 4.700 4.700 1 4 1 3Z" stroke="#666" stroke-width="1.100" />`)}${fit("Data Source", 84)}</div>`],
        [163, 72, html`<div class="tab">${fit("Sheet 1", 51)}</div>`],
        [235, 71, html`<div class="tab">${fit("Sheet 2", 52)}</div>`],
        [306, 71, html`<div class="tab">${fit("Sheet 3", 52)}</div>`],
        [377, 125, html`<div class="tab on">${icon(12, 12, svg`<path d="M.6.6h10.400v10.400H.6ZM5.800.6V11M.6 5.800H11" stroke="#555" stroke-width="1.200" />`)}${fit("Dashboard 1", 90)}</div>`],
        [502, 32, addTab("M8 12.500H1.600V2.500h10.500V8M4.500 10V7.500M7 10V5M9.500 8.500V6")],
        [534, 32, addTab("M8 12.500H1.600V2.500h11V8M7 2.500v10M1.600 7.500h11")],
        [566, 33, addTab("M7.300 4C5.500 2.500 3.500 2.500 1.600 2.700v9.500c2-.3 4 0 5.700 1.300V4c1.700-1.500 3.700-1.500 5.700-1.300V8")],
      ])}</div>
      <div class="status">${strip([
        [1501, 1, bar], [1658, 1, bar], [1690, 1, bar], [1722, 1, bar], [1779, 1, bar],
        [1788, 8, nav("M0 8.500h1.300v7H0ZM6 8.500v7L2 12Z")],
        [1804, 8, nav("M5 8.500v7L1 12Z")],
        [1820, 8, nav("M1 8.500v7L5 12Z")],
        [1836, 8, nav("M0 8.500v7L4 12ZM4.700 8.500H6v7H4.700Z")],
        [1850, 1, bar],
        [1859, 11, icon(11, 25, svg`<path d="M0 6h3v3H0ZM4 6h3v3H4ZM8 6h3v3H8ZM0 10h3v3H0ZM4 10h3v3H4ZM8 10h3v3H8ZM0 14h3v3H0ZM4 14h3v3H4ZM8 14h3v3H8Z" fill="#b8b8b8" />`)],
        [1881, 11, icon(11, 25, svg`<path d="M0 6h11v7H0ZM0 14h3v3H0ZM4 14h3v3H4ZM8 14h3v3H8Z" fill="#b8b8b8" />`)],
        [1903, 11, icon(11, 25, svg`<path d="M0 6h11v11H0Z" fill="#5f5f5f" />`)],
      ])}</div>
      <div class="taskbar">${strip([
        [25, 200, html`<div class="weather">
          ${icon(30, 40, svg`<defs><linearGradient id="cl" x1="0" y1="0" x2="0" y2="1"><stop offset="0" stop-color="#8fb4f0" /><stop offset="1" stop-color="#d3e2fa" /></linearGradient><linearGradient id="su" x1="0" y1="0" x2="1" y2="1"><stop offset="0" stop-color="#f5b52e" /><stop offset="1" stop-color="#ef6c0c" /></linearGradient></defs>
            <circle cx="21.500" cy="15" r="7.300" fill="url(#su)" /><path d="M7 33a7 7 0 0 1-.5-14 9 9 0 0 1 16-1.500A8 8 0 0 1 23 33Z" fill="#86a9ec" /><path d="M7 32a6.500 6.500 0 0 1-2-12c5-3 10 0 11 4 4-4 11-2 13 2q0 6-6 6Z" fill="url(#cl)" />`)}
          <div class="two">${fit("27°C", 31)}<span class="dim">${fit("Mostly cloudy", 94)}</span></div></div>`],
        ...apps,
      ])}</div>
    `;
  }
}
